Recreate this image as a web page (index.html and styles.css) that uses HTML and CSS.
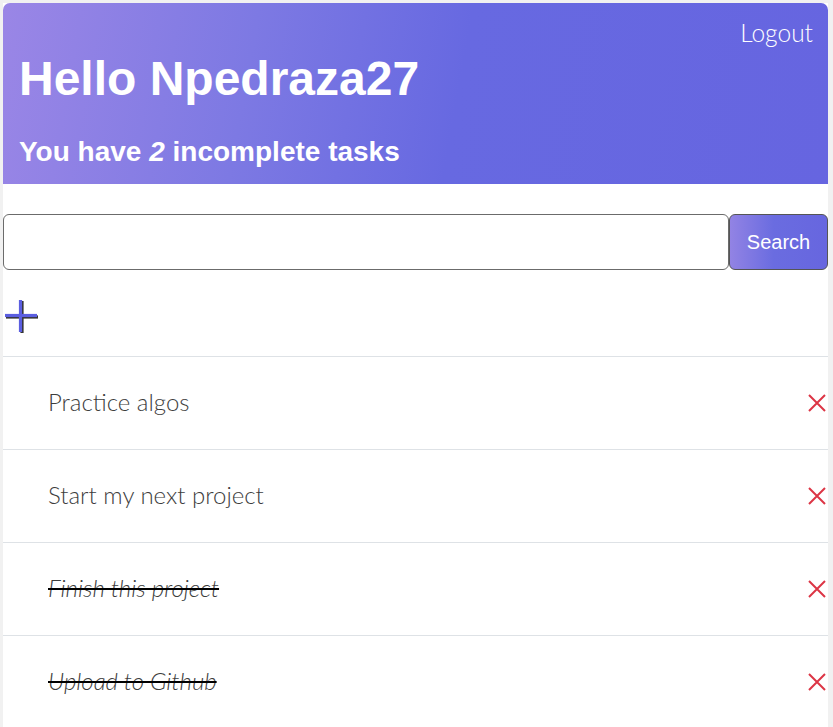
FILE: index.html
```html
<!DOCTYPE html>
<html>
<head>
<meta charset="utf-8">
<link rel="stylesheet" href="styles.css">
</head>
<body>
<div class="app">
  <header class="header">
    <div class="logout-row"><a class="logout">Logout</a></div>
    <h1 class="hello">Hello Npedraza27</h1>
    <h2 class="count">You have <em>2</em> incomplete tasks</h2>
  </header>
  <form class="search">
    <input class="search-input" type="text">
    <button class="search-btn" type="button">Search</button>
  </form>
  <div class="add-row">
    <svg class="plus" width="36" height="36" viewBox="0 0 36 36">
      <g stroke="#333" stroke-width="3.2" stroke-linecap="butt">
        <line x1="3" y1="19" x2="35" y2="19"/>
        <line x1="19" y1="3" x2="19" y2="35"/>
      </g>
      <g stroke="#5b5ee0" stroke-width="3.2" stroke-linecap="butt">
        <line x1="2" y1="17.5" x2="34" y2="17.5"/>
        <line x1="17.5" y1="2" x2="17.5" y2="34"/>
      </g>
    </svg>
  </div>
  <ul class="tasks">
    <li class="task"><span class="task-text">Practice algos</span><span class="del"><svg width="18" height="18" viewBox="0 0 18 18"><path d="M1 1L17 17M17 1L1 17" stroke="#dc3545" stroke-width="2"/></svg></span></li>
    <li class="task"><span class="task-text">Start my next project</span><span class="del"><svg width="18" height="18" viewBox="0 0 18 18"><path d="M1 1L17 17M17 1L1 17" stroke="#dc3545" stroke-width="2"/></svg></span></li>
    <li class="task done"><span class="task-text">Finish this project</span><span class="del"><svg width="18" height="18" viewBox="0 0 18 18"><path d="M1 1L17 17M17 1L1 17" stroke="#dc3545" stroke-width="2"/></svg></span></li>
    <li class="task done"><span class="task-text">Upload to Github</span><span class="del"><svg width="18" height="18" viewBox="0 0 18 18"><path d="M1 1L17 17M17 1L1 17" stroke="#dc3545" stroke-width="2"/></svg></span></li>
  </ul>
</div>
</body>
</html>
```
FILE: styles.css
```css
html, body {
  margin: 0;
  padding: 0;
  background: #f1f1f1;
  height: 100%;
}
.app {
  margin: 3px 5px 0 3px;
  background: #fff;
  min-height: 724px;
}
.header {
  background: linear-gradient(100deg, #9a86e6 0%, #7d79e3 30%, #6769e1 55%, #6665e0 100%);
  border-radius: 7px 7px 0 0;
  height: 181px;
  box-sizing: border-box;
  padding: 16px 15px 0 16px;
  color: #fff;
}
.logout-row {
  display: flex;
  justify-content: flex-end;
}
.logout {
  font-family: "Lato", sans-serif;
  font-weight: 300;
  font-size: 24.5px;
  line-height: 28px;
  color: #fff;
}
.hello {
  font-family: "Liberation Sans", Arial, sans-serif;
  font-weight: 700;
  font-size: 48px;
  line-height: 60px;
  margin: 0;
  margin-top: 2px;
}
.count {
  font-family: "Liberation Sans", Arial, sans-serif;
  font-weight: 700;
  font-size: 28px;
  line-height: 34px;
  margin: 0;
  margin-top: 26px;
}
.count em {
  font-style: italic;
}
.search {
  display: flex;
  margin-top: 30px;
}
.search-input {
  flex: 1;
  height: 56px;
  box-sizing: border-box;
  border: 1px solid #6b6b6b;
  border-radius: 6px;
  margin: 0;
}
.search-btn {
  width: 99px;
  height: 56px;
  box-sizing: border-box;
  border: 1px solid #555;
  border-radius: 6px;
  background: linear-gradient(90deg, #9283e4 0%, #6a6ce0 45%, #6766df 100%);
  color: #fff;
  font-family: "Liberation Sans", Arial, sans-serif;
  font-size: 20px;
  margin: 0;
  padding: 0;
}
.add-row {
  height: 86px;
  display: flex;
  align-items: center;
  padding-left: 0;
}
.plus {
  display: block;
  margin-top: 6px;
}
.tasks {
  list-style: none;
  margin: 0;
  padding: 0;
  border-top: 1px solid #dee2e6;
}
.task {
  height: 92px;
  border-bottom: 1px solid #dee2e6;
  display: flex;
  align-items: center;
  justify-content: space-between;
  padding-left: 45px;
  padding-right: 2px;
}
.task-text {
  font-family: "Lato", sans-serif;
  font-weight: 300;
  font-size: 24px;
  color: #3d3d3d;
  margin-bottom: 4px;
}
.done .task-text {
  font-style: italic;
  text-decoration: line-through;
  text-decoration-color: #000;
  text-decoration-thickness: 2px;
}
.del {
  display: flex;
  width: 18px;
  height: 18px;
}
```
